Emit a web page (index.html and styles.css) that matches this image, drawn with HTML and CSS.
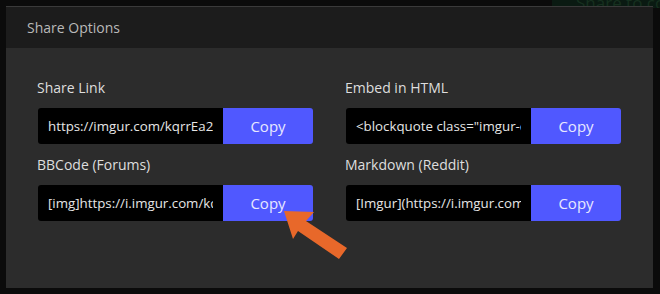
FILE: index.html
```html
<!DOCTYPE html>
<html>
<head>
<meta charset="utf-8">
<link rel="stylesheet" href="styles.css">
</head>
<body>
<div class="bg-text">Share to co</div>
<div class="modal">
  <div class="modal-header">Share Options</div>
  <div class="modal-body">
    <div class="col">
      <div class="label">Share Link</div>
      <div class="field"><div class="value"><span class="clip">https://imgur.com/kqrrEa2</span></div><div class="btn">Copy</div></div>
      <div class="label">BBCode (Forums)</div>
      <div class="field"><div class="value"><span class="clip">[img]https://i.imgur.com/kqrrEa2.png[/img]</span></div><div class="btn">Copy</div></div>
    </div>
    <div class="col">
      <div class="label">Embed in HTML</div>
      <div class="field"><div class="value"><span class="clip">&lt;blockquote class="imgur-embed-pub"</span></div><div class="btn">Copy</div></div>
      <div class="label">Markdown (Reddit)</div>
      <div class="field"><div class="value"><span class="clip">[Imgur](https://i.imgur.com/kqrrEa2.png)</span></div><div class="btn">Copy</div></div>
    </div>
  </div>
</div>
<svg class="arrow" width="660" height="294" viewBox="0 0 660 294">
  <polygon points="284,211 314,212 306,221 347,248 339,259 298,231 293,239" fill="#e8682a"/>
</svg>
</body>
</html>
```
FILE: styles.css
```css
html, body {
  margin: 0;
  padding: 0;
}
body {
  width: 660px;
  height: 294px;
  background: #0b0b0b;
  font-family: "Open Sans", "Noto Sans", sans-serif;
  position: relative;
  overflow: hidden;
  padding-top: 7px;
  padding-left: 6px;
  box-sizing: border-box;
}
.bg-text {
  position: absolute;
  top: -6px;
  left: 552px;
  width: 108px;
  height: 14px;
  background: #0a1a12;
  color: #16301f;
  font-size: 17px;
  line-height: 18px;
  padding-left: 24px;
  box-sizing: border-box;
  white-space: nowrap;
  overflow: hidden;
}
.modal {
  position: relative;
  width: 647px;
  height: 281px;
  background: #2c2c2c;
  box-shadow: 0 -1px 0 #3a3a3a;
}
.modal-header {
  height: 41px;
  background: #1c1c1c;
  color: #b9b9b9;
  font-size: 14px;
  line-height: 41px;
  padding-left: 21px;
}
.modal-body {
  display: flex;
  gap: 33px;
  padding: 30px 32px 0 32px;
}
.col {
  width: 275px;
  display: flex;
  flex-direction: column;
}
.label {
  color: #dedede;
  font-size: 14px;
  line-height: 20px;
  height: 20px;
  margin-left: -1px;
  margin-bottom: 10px;
}
.field {
  display: flex;
  height: 36px;
  margin-bottom: 11px;
}
.value {
  width: 185px;
  background: #000;
  color: #e6e6e6;
  font-size: 13.3px;
  line-height: 36px;
  padding-left: 10px;
  padding-right: 10px;
  box-sizing: border-box;
  border-radius: 3px 0 0 3px;
}
.clip {
  display: block;
  width: 165px;
  white-space: nowrap;
  overflow: hidden;
}
.btn {
  width: 90px;
  background: #5058ff;
  color: #e8e8ff;
  font-size: 15px;
  line-height: 36px;
  text-align: center;
  border-radius: 0 3px 3px 0;
}
.arrow {
  position: absolute;
  left: 0;
  top: 0;
}
```
